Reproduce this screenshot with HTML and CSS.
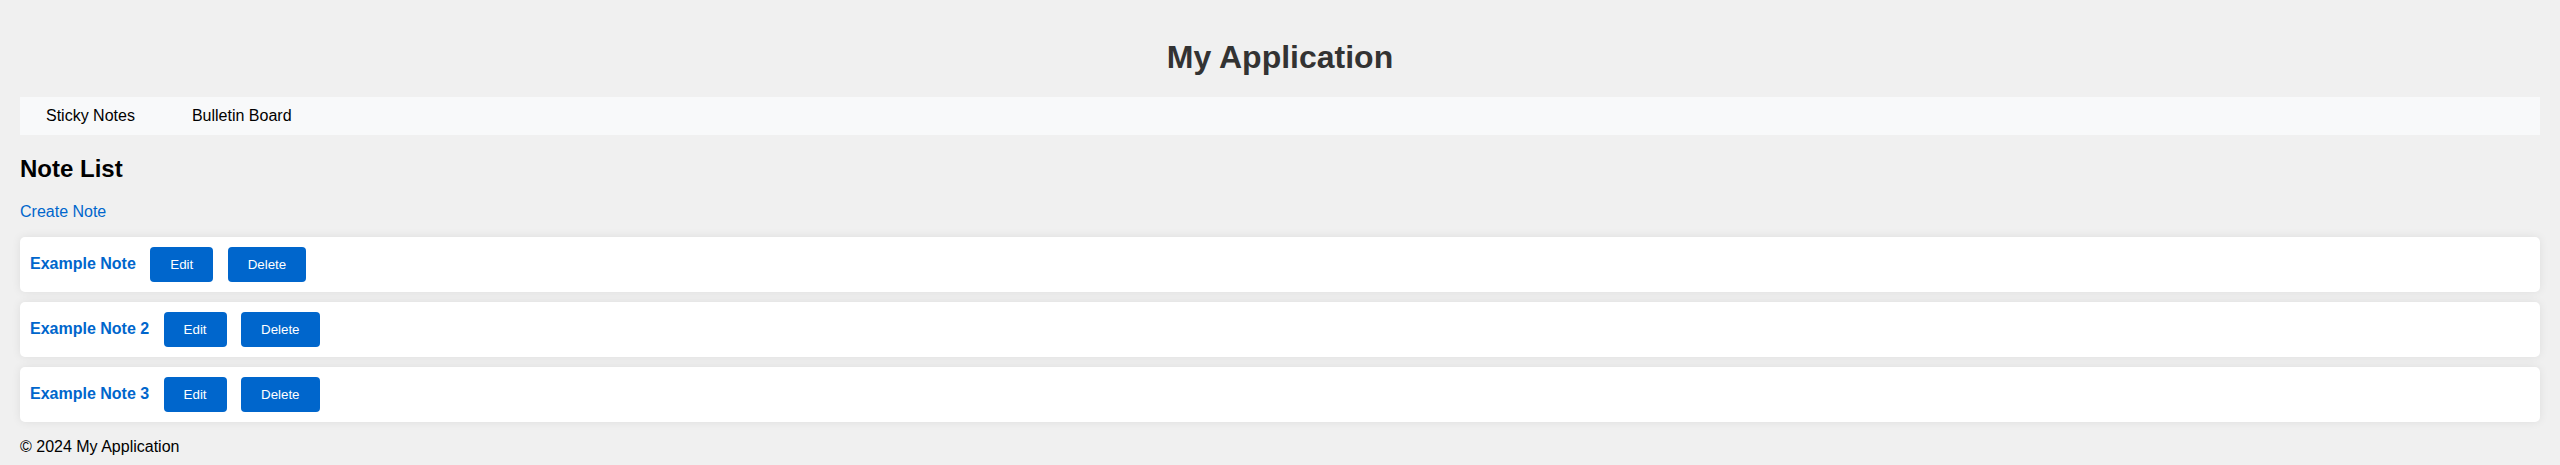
FILE: index.html
```html
<!DOCTYPE html>
<html lang="en">
<head>
<meta charset="utf-8">
<title>My Application</title>
<link rel="stylesheet" href="styles.css">
</head>
<body>
<header class="site-header">
  <h1 class="site-title">My Application</h1>
  <nav class="main-nav">
    <a class="nav-link" href="#">Sticky Notes</a>
    <a class="nav-link" href="#">Bulletin Board</a>
  </nav>
</header>
<main class="content">
  <h2 class="page-title">Note List</h2>
  <p class="create"><a class="create-link" href="#">Create Note</a></p>
  <div class="note-list">
    <div class="note-card">
      <a class="note-title" href="#">Example Note</a>
      <button class="btn">Edit</button>
      <button class="btn">Delete</button>
    </div>
    <div class="note-card">
      <a class="note-title" href="#">Example Note 2</a>
      <button class="btn">Edit</button>
      <button class="btn">Delete</button>
    </div>
    <div class="note-card">
      <a class="note-title" href="#">Example Note 3</a>
      <button class="btn">Edit</button>
      <button class="btn">Delete</button>
    </div>
  </div>
</main>
<footer class="site-footer">
  <p class="copyright">© 2024 My Application</p>
</footer>
</body>
</html>
```
FILE: styles.css
```css
html, body {
  margin: 0;
  padding: 0;
}
body {
  background: #f0f0f0;
  font-family: "Liberation Sans", Arial, sans-serif;
  font-size: 16px;
  color: #000;
  padding: 0 20px;
  overflow: hidden;
}
.site-header {
  padding-top: 18px;
}
.site-title {
  margin: 21px 0;
  font-size: 32px;
  font-weight: bold;
  color: #333;
  text-align: center;
  line-height: normal;
}
.main-nav {
  display: flex;
  background: #f8f9fa;
  padding: 10px 0 10px 26px;
}
.nav-link {
  color: #000;
  text-decoration: none;
  margin-right: 57px;
  line-height: normal;
}
.page-title {
  margin: 19.92px 0;
  font-size: 24px;
  font-weight: bold;
  line-height: normal;
}
.create {
  margin: 16px 0;
}
.create-link {
  color: #0066cc;
  text-decoration: none;
}
.note-list {
  display: flex;
  flex-direction: column;
  gap: 10px;
}
.note-card {
  display: flex;
  align-items: center;
  background: #fff;
  border-radius: 5px;
  padding: 10px;
  box-shadow: 0 0 10px rgba(0, 0, 0, 0.08);
}
.note-title {
  color: #0066cc;
  font-weight: bold;
  text-decoration: none;
  margin-right: 4.45px;
}
.btn {
  background: #0066cc;
  color: #fff;
  border: none;
  border-radius: 4px;
  padding: 10px 20px;
  font-family: "Liberation Sans", Arial, sans-serif;
  font-size: 13.333px;
  line-height: normal;
  margin-left: 10px;
  margin-right: 4.45px;
}
.site-footer {
  margin-top: 16px;
}
.copyright {
  margin: 0;
}
```
